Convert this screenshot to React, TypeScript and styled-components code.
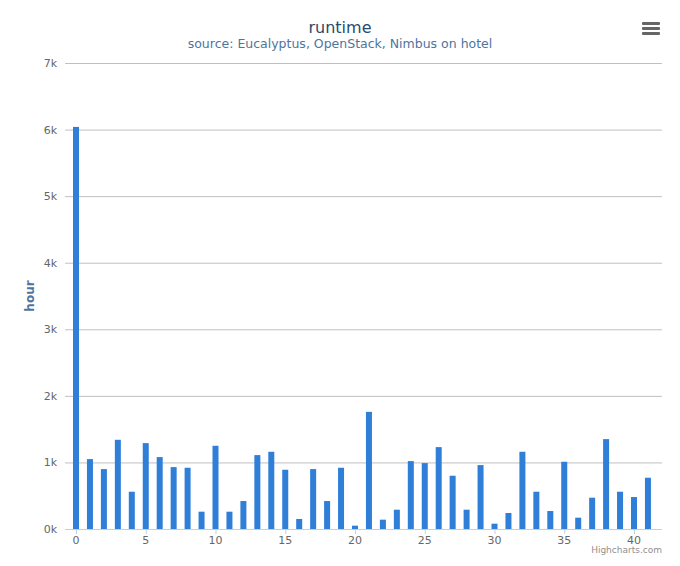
import React from "react";
import styled, { createGlobalStyle } from "styled-components";

const Global = createGlobalStyle`
  html, body { margin: 0; padding: 0; background: #fff; }
  body { font-family: "DejaVu Sans", sans-serif; }
`;

const Wrap = styled.div`
  width: 680px;
  height: 566px;
  position: relative;
`;

const Chart = styled.svg`
  display: block;
  font-family: "DejaVu Sans", sans-serif;
`;

const Menu = styled.div`
  position: absolute;
  right: 20px;
  top: 22px;
  width: 18px;
  display: flex;
  flex-direction: column;
  gap: 2px;
  span { height: 3px; background: #666; border-radius: 1px; }
`;

const values = [6.04,1.05,0.9,1.34,0.56,1.29,1.08,0.93,0.92,0.26,1.25,0.26,0.42,1.11,1.16,0.89,0.15,0.9,0.42,0.92,0.05,1.76,0.14,0.29,1.02,0.99,1.23,0.8,0.29,0.96,0.08,0.24,1.16,0.56,0.27,1.01,0.17,0.47,1.35,0.56,0.48,0.77];

const L = 65, R = 662, T = 63, B = 529;
const perK = (B - T) / 7;
const cx = (i: number) => 76 + i * 13.95;

export default function App() {
  return (
    <Wrap>
      <Global />
      <Chart width={680} height={566}>
        <text x={340} y={33} textAnchor="middle" fontSize={16} fill="#274b6d">runtime</text>
        <text x={340} y={48} textAnchor="middle" fontSize={12.5} fill="#4d759e">source: Eucalyptus, OpenStack, Nimbus on hotel</text>
        {[0,1,2,3,4,5,6,7].map(k => {
          const y = B - k * perK;
          return (
            <g key={k}>
              <line x1={L} x2={R} y1={y + 0.5} y2={y + 0.5} stroke={k === 0 ? "#c0d0e0" : "#c0c0c0"} strokeWidth={1} />
              <text x={57} y={y + 4} textAnchor="end" fontSize={11} fill="#666">{k}k</text>
            </g>
          );
        })}
        {values.map((v, i) => (
          <rect key={i} x={cx(i) - 3} y={B - v * perK} width={6} height={v * perK} fill="#2f7ed8" />
        ))}
        {[0,5,10,15,20,25,30,35,40].map(t => (
          <g key={t}>
            <line x1={cx(t) + 0.5} x2={cx(t) + 0.5} y1={B} y2={B + 5} stroke="#c0d0e0" />
            <text x={cx(t)} y={544} textAnchor="middle" fontSize={11} fill="#666">{t}</text>
          </g>
        ))}
        <text transform="translate(34,296) rotate(-90)" textAnchor="middle" fontSize={12} fontWeight="bold" fill="#4d759e">hour</text>
        <text x={662} y={553} textAnchor="end" fontSize={9} fill="#909090">Highcharts.com</text>
      </Chart>
      <Menu><span /><span /><span /></Menu>
    </Wrap>
  );
}
